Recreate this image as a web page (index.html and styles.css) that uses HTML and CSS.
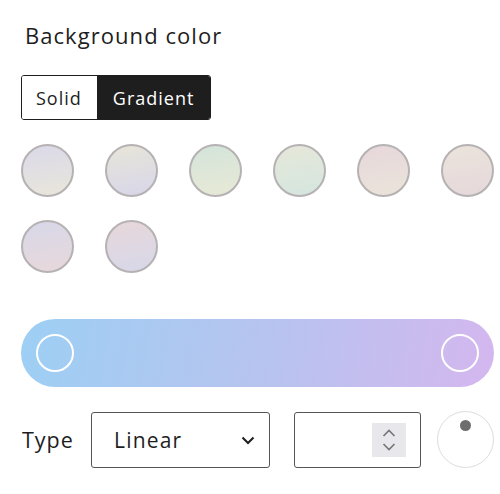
FILE: index.html
```html
<!DOCTYPE html>
<html>
<head>
<meta charset="utf-8">
<link rel="stylesheet" href="styles.css">
</head>
<body>
<div class="panel">
  <h2 class="title">Background color</h2>
  <div class="toggle">
    <button class="seg">Solid</button>
    <button class="seg active">Gradient</button>
  </div>
  <div class="swatches">
    <span class="sw s1"></span>
    <span class="sw s2"></span>
    <span class="sw s3"></span>
    <span class="sw s4"></span>
    <span class="sw s5"></span>
    <span class="sw s6"></span>
    <span class="sw s7"></span>
    <span class="sw s8"></span>
  </div>
  <div class="bar">
    <span class="handle left"></span>
    <span class="handle right"></span>
  </div>
  <div class="controls">
    <span class="label">Type</span>
    <div class="select">
      <span>Linear</span>
      <svg width="14" height="9" viewBox="0 0 14 9"><path d="M1.5 1.5 L7 7 L12.5 1.5" fill="none" stroke="#1e1e1e" stroke-width="2"/></svg>
    </div>
    <div class="number">
      <div class="spin">
        <svg width="16" height="26" viewBox="0 0 16 26"><path d="M2.5 9 L8 3.5 L13.5 9" fill="none" stroke="#757575" stroke-width="1.6"/><path d="M2.5 17 L8 22.5 L13.5 17" fill="none" stroke="#757575" stroke-width="1.6"/></svg>
      </div>
    </div>
    <div class="angle"><span class="dot"></span></div>
  </div>
</div>
</body>
</html>
```
FILE: styles.css
```css
* { box-sizing: border-box; }
html, body { margin: 0; padding: 0; background: #fff; }
body { font-family: "Open Sans", "DejaVu Sans", sans-serif; color: #1e1e1e; }
.panel { padding: 19px 6px 0 21px; width: 500px; }
.title { font-size: 22px; font-weight: 400; margin: 0 0 0 4px; line-height: 32px; letter-spacing: 1.05px; }
.toggle { display: inline-flex; margin-top: 24px; border: 1.5px solid #1e1e1e; border-radius: 3px; overflow: hidden; height: 45px; }
.seg { font-family: inherit; font-size: 18px; letter-spacing: 1px; border: 0; background: #fff; color: #1e1e1e; padding: 0 15px 0 14px; margin: 0; }
.seg.active { background: #1e1e1e; color: #fff; padding: 0 16px 0 16px; }
.swatches { display: grid; grid-template-columns: repeat(6, 53px); column-gap: 31px; row-gap: 23px; margin-top: 24px; }
.sw { width: 53px; height: 53px; border-radius: 50%; border: 2px solid #b6b1b3; display: block; }
.s1 { background: linear-gradient(170deg, #dad9e9, #e9e6da); }
.s2 { background: linear-gradient(170deg, #e7e5d8, #d8d6e9); }
.s3 { background: linear-gradient(170deg, #d3e4da, #e8e9d6); }
.s4 { background: linear-gradient(170deg, #e6e7d9, #d4e6df); }
.s5 { background: linear-gradient(170deg, #e7d7db, #eae4da); }
.s6 { background: linear-gradient(170deg, #eae3db, #e6d8db); }
.s7 { background: linear-gradient(170deg, #d8d8e8, #e7d8db); }
.s8 { background: linear-gradient(170deg, #e7d7da, #d7d8e9); }
.bar { position: relative; height: 68px; border-radius: 34px; margin-top: 46px; background: linear-gradient(100deg, #9dcff4 0%, #b6c4ef 50%, #d4b7ef 100%); }
.handle { position: absolute; top: 15px; width: 38px; height: 38px; border: 2.5px solid #fff; border-radius: 50%; }
.handle.left { left: 15px; }
.handle.right { right: 15px; }
.controls { display: flex; align-items: center; margin-top: 24px; height: 57px; }
.label { font-size: 21.5px; letter-spacing: 1px; margin-left: 1px; width: 69px; }
.select { width: 179px; height: 56px; border: 1.5px solid #555; border-radius: 3px; display: flex; align-items: center; justify-content: space-between; padding: 0 14px 0 22px; font-size: 21px; letter-spacing: 1.2px; }
.select svg { margin-top: 2px; }
.number { width: 127px; height: 56px; border: 1.5px solid #555; border-radius: 3px; margin-left: 24px; display: flex; align-items: center; justify-content: flex-end; padding-right: 14px; }
.spin { width: 34px; height: 34px; background: #e8e8ec; display: flex; align-items: center; justify-content: center; }
.angle { position: relative; width: 57px; height: 57px; border-radius: 50%; border: 1.5px solid #ddd; margin-left: 16px; }
.dot { position: absolute; left: 22px; top: 8px; width: 11px; height: 11px; border-radius: 50%; background: #6e6e6e; }
```
